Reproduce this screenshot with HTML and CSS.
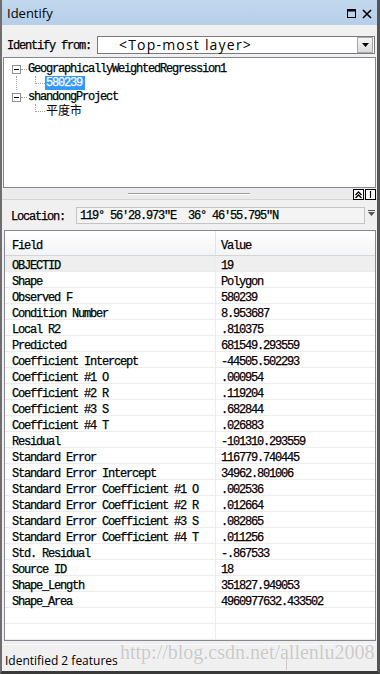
FILE: index.html
```html
<!DOCTYPE html>
<html lang="en">
<head>
    <meta charset="UTF-8">
    <title>Identify</title>
    <link rel="stylesheet" href="styles.css">
</head>
<body>
<div class="window">
    <div class="titlebar">
        <span class="title">Identify</span>
        <span class="title-btns">
            <svg width="10" height="10" viewBox="0 0 10 10"><rect x="0.5" y="0.5" width="8" height="8" fill="none" stroke="#000"/><line x1="0" y1="1.5" x2="9" y2="1.5" stroke="#000" stroke-width="2"/></svg>
            <svg width="10" height="10" viewBox="0 0 10 10"><path d="M1 1 L9 9 M9 1 L1 9" stroke="#000" stroke-width="1.6"/></svg>
        </span>
    </div>

    <div class="from-row">
        <span class="ss from-label">Identify from:</span>
        <div class="combo">
            <span class="combo-text">&lt;Top-most layer&gt;</span>
            <span class="combo-btn">
                <svg width="7" height="4" viewBox="0 0 7 4"><path d="M0 0 H7 L3.5 4 Z" fill="#000"/></svg>
            </span>
        </div>
    </div>

    <div class="tree ss">
        <div class="node root">
            <span class="exp"></span><span class="hdot"></span><span class="name">GeographicallyWeightedRegression1</span>
        </div>
        <div class="node child">
            <span class="vline"></span><span class="elbow"></span><span class="name selected">580239</span>
        </div>
        <div class="node root">
            <span class="exp"></span><span class="hdot"></span><span class="name">shandongProject</span>
        </div>
        <div class="node child">
            <span class="vline none"></span><span class="elbow"></span><span class="name cjk">平度市</span>
        </div>
    </div>

    <div class="splitter">
        <span class="grip"></span>
        <span class="split-btns">
            <span class="sbtn"><svg width="9" height="9" viewBox="0 0 9 9"><path d="M1.5 5 L4.5 2 L7.5 5 M1.5 8 L4.5 5 L7.5 8" fill="none" stroke="#000" stroke-width="1.3"/></svg></span>
            <span class="sbtn"><svg width="9" height="9" viewBox="0 0 9 9"><line x1="4.5" y1="1" x2="4.5" y2="8" stroke="#000" stroke-width="1.2"/></svg></span>
        </span>
    </div>

    <div class="location">
        <span class="ss loc-label">Location:</span>
        <span class="ss loc-box">119° 56′28.973″E  36° 46′55.795″N</span>
        <svg class="loc-drop" width="7" height="6" viewBox="0 0 7 6"><rect x="0" y="0" width="7" height="1" fill="#555"/><path d="M0 2 H7 L3.5 6 Z" fill="#555"/></svg>
    </div>

    <div class="grid ss">
        <div class="row head"><span class="cell">Field</span><span class="cell">Value</span></div>
        <div class="row cur"><span class="cell">OBJECTID</span><span class="cell">19</span></div>
        <div class="row"><span class="cell">Shape</span><span class="cell">Polygon</span></div>
        <div class="row"><span class="cell">Observed F</span><span class="cell">580239</span></div>
        <div class="row"><span class="cell">Condition Number</span><span class="cell">8.953687</span></div>
        <div class="row"><span class="cell">Local R2</span><span class="cell">.810375</span></div>
        <div class="row"><span class="cell">Predicted</span><span class="cell">681549.293559</span></div>
        <div class="row"><span class="cell">Coefficient Intercept</span><span class="cell">-44505.502293</span></div>
        <div class="row"><span class="cell">Coefficient #1 O</span><span class="cell">.000954</span></div>
        <div class="row"><span class="cell">Coefficient #2 R</span><span class="cell">.119204</span></div>
        <div class="row"><span class="cell">Coefficient #3 S</span><span class="cell">.682844</span></div>
        <div class="row"><span class="cell">Coefficient #4 T</span><span class="cell">.026883</span></div>
        <div class="row"><span class="cell">Residual</span><span class="cell">-101310.293559</span></div>
        <div class="row"><span class="cell">Standard Error</span><span class="cell">116779.740445</span></div>
        <div class="row"><span class="cell">Standard Error Intercept</span><span class="cell">34962.801006</span></div>
        <div class="row"><span class="cell">Standard Error Coefficient #1 O</span><span class="cell">.002536</span></div>
        <div class="row"><span class="cell">Standard Error Coefficient #2 R</span><span class="cell">.012664</span></div>
        <div class="row"><span class="cell">Standard Error Coefficient #3 S</span><span class="cell">.082865</span></div>
        <div class="row"><span class="cell">Standard Error Coefficient #4 T</span><span class="cell">.011256</span></div>
        <div class="row"><span class="cell">Std. Residual</span><span class="cell">-.867533</span></div>
        <div class="row"><span class="cell">Source ID</span><span class="cell">18</span></div>
        <div class="row"><span class="cell">Shape_Length</span><span class="cell">351827.949053</span></div>
        <div class="row"><span class="cell">Shape_Area</span><span class="cell">4960977632.433502</span></div>
        <div class="row"><span class="cell"></span><span class="cell"></span></div>
        <div class="row"><span class="cell"></span><span class="cell"></span></div>
    </div>

    <div class="status">
        <span class="status-pane">Identified 2 features</span>
        <span class="watermark">http://blog.csdn.net/allenlu2008</span>
    </div>
</div>
</body>
</html>
```

FILE: styles.css
```css
* {
    margin: 0;
    padding: 0;
    box-sizing: border-box;
}

body {
    width: 380px;
    height: 674px;
    overflow: hidden;
    background: #f0f0f0;
}

.window {
    width: 380px;
    height: 674px;
    display: flex;
    flex-direction: column;
    background: #f0f0f0;
    border-left: 2px solid #6e6e6e;
    border-right: 3px solid #555;
    border-bottom: 3px solid #3a3a3a;
}

/* SimSun-like text */
.ss {
    font-family: "Liberation Mono", "Noto Sans CJK SC", monospace;
    font-size: 12px;
    letter-spacing: -1.2px;
    color: #000;
    -webkit-text-stroke: 0.25px #000;
}

.titlebar {
    height: 25px;
    flex: none;
    display: flex;
    align-items: center;
    justify-content: space-between;
    padding: 0 5px 0 5px;
    background: linear-gradient(#c3d8ee, #b6cee8);
    font: 13px "Open Sans", sans-serif;
}

.title {
    padding-top: 1px;
}

.title-btns {
    display: flex;
    gap: 5px;
    padding-top: 2px;
}

.from-row {
    height: 32px;
    flex: none;
    display: flex;
    justify-content: space-between;
    align-items: flex-start;
    padding: 11px 2px 0 5px;
}

.from-label {
    line-height: 18px;
    padding-top: 1px;
}

.combo {
    width: 278px;
    height: 18px;
    display: flex;
    align-items: center;
    background: #fff;
    border: 1px solid #7a7a7a;
}

.combo-text {
    flex: 1;
    padding-left: 21px;
    font: 14px/16px "Open Sans", sans-serif;
    letter-spacing: 1.2px;
}

.combo-btn {
    width: 16px;
    height: 16px;
    margin-right: 1px;
    display: flex;
    align-items: center;
    justify-content: center;
    background: linear-gradient(#f4f4f4, #dcdcdc);
    border: 1px solid #a8a8a8;
}

.tree {
    height: 131px;
    flex: none;
    margin: 0 1px;
    padding-top: 4px;
    background: #fff;
    border: 1px solid #828790;
}

.node {
    height: 14px;
    display: flex;
    align-items: center;
    line-height: 14px;
}

.root {
    padding-left: 8px;
}

.exp {
    width: 9px;
    height: 9px;
    border: 1px solid #919191;
    display: flex;
    align-items: center;
    justify-content: center;
}

.exp::after {
    content: "";
    width: 5px;
    height: 1px;
    background: #000;
}

.hdot {
    width: 6px;
    border-top: 1px dotted #a0a0a0;
    margin-right: 1px;
}

.child {
    padding-left: 12px;
}

.vline {
    width: 19px;
    height: 14px;
    border-left: 1px dotted #a0a0a0;
}

.vline.none {
    border-left-color: transparent;
}

.elbow {
    align-self: flex-start;
    width: 10px;
    height: 8px;
    border-left: 1px dotted #a0a0a0;
    border-bottom: 1px dotted #a0a0a0;
}

.selected {
    background: #3399ff;
    color: #fff;
    -webkit-text-stroke: 0.25px #fff;
    padding: 0 3px 0 1px;
}

.cjk {
    letter-spacing: 0;
    font-family: "Noto Sans CJK SC", sans-serif;
    font-size: 12px;
    line-height: 12px;
    margin: 0 0 3px 1px;
    -webkit-text-stroke: 0;
}

.splitter {
    height: 12px;
    flex: none;
    display: flex;
    align-items: center;
    background: #ebebeb;
    border-bottom: 1px solid #d4d4d4;
}

.grip {
    margin-left: 126px;
    width: 122px;
    height: 2px;
    border-top: 1px solid #a0a0a0;
    border-bottom: 1px solid #fff;
}

.split-btns {
    margin-left: auto;
    margin-right: 1px;
    align-self: flex-start;
    display: flex;
    gap: 1px;
    padding-top: 1px;
}

.sbtn {
    width: 11px;
    height: 11px;
    border: 1px solid #000;
    background: #fff;
    display: flex;
    align-items: center;
    justify-content: center;
}

.location {
    height: 30px;
    flex: none;
    display: flex;
    align-items: flex-start;
    padding: 7px 0 0 9px;
}

.loc-label {
    line-height: 14px;
    padding-top: 3px;
}

.loc-box {
    margin-left: 11px;
    width: 289px;
    height: 17px;
    line-height: 13px;
    padding: 2px 0 0 3px;
    background: #f4f4f4;
    border: 1px solid #c4c4c4;
    white-space: pre;
}

.loc-drop {
    margin: 3px 0 0 3px;
}

.grid {
    height: 411px;
    flex: none;
    margin: 0 1px 0 2px;
    background: #fff;
    border: 1px solid #828790;
    overflow: hidden;
}

.row {
    display: grid;
    grid-template-columns: 211px 1fr;
    height: 16px;
    border-bottom: 1px solid #ececec;
}

.cell {
    line-height: 12px;
    padding: 4px 0 0 5px;
    white-space: nowrap;
}

.cell:first-child {
    padding-left: 7px;
    border-right: 1px solid #ececec;
}

.row.head {
    height: 25px;
    background: linear-gradient(#ffffff, #f3f4f6);
    border-bottom: 1px solid #d5d5d5;
}

.row.head .cell {
    line-height: 18px;
    padding-top: 6px;
}

.row.head .cell:first-child {
    border-right-color: #e3e3e3;
}

.row.cur {
    background: #efefef;
}

.status {
    position: relative;
    height: 26px;
    flex: none;
    margin-top: 3px;
    display: flex;
    align-items: center;
    padding-top: 5px;
    font: 12px "Open Sans", sans-serif;
    border-top: 1px solid #fafafa;
}

.status-pane {
    width: 285px;
    height: 100%;
    padding-left: 3px;
    display: flex;
    align-items: center;
    border-right: 1px solid #c8c8c8;
}

.watermark {
    position: absolute;
    left: 118px;
    top: -4px;
    font: 20px "Liberation Serif", serif;
    color: rgba(150, 150, 150, 0.5);
    text-shadow: 0 0 1px #fff;
    white-space: nowrap;
}
```
